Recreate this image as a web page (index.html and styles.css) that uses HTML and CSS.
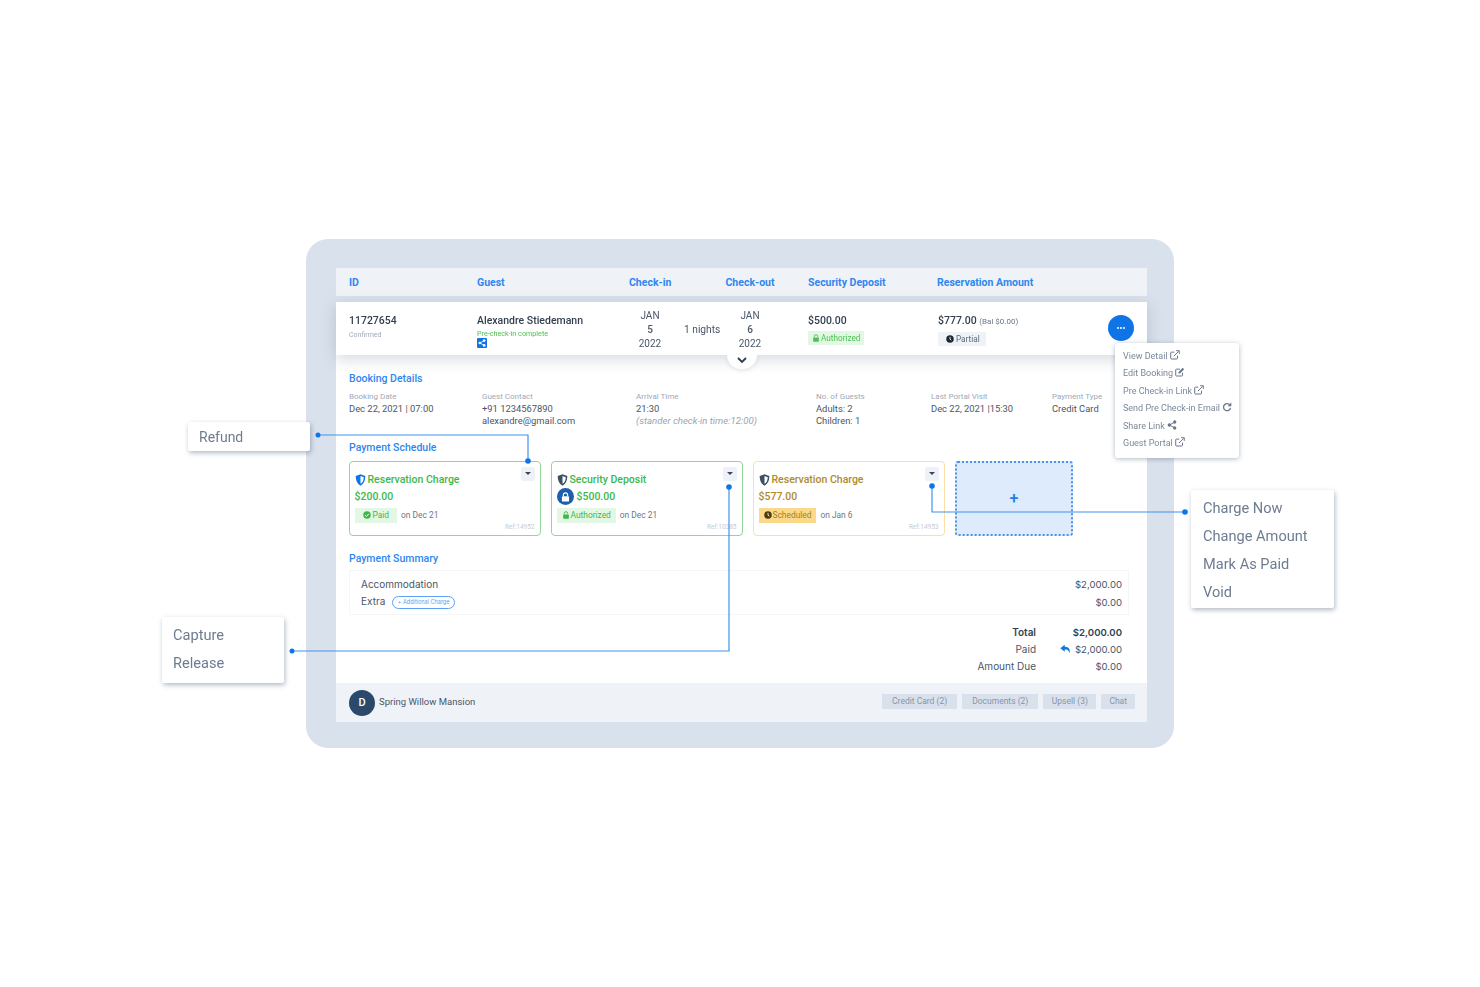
FILE: index.html
```html
<!DOCTYPE html>
<html lang="en">
<head>
  <meta charset="UTF-8" />
  <meta name="viewport" content="width=device-width, initial-scale=1.0" />
  <title>Reservation payments</title>
  <link rel="stylesheet" href="styles.css">
</head>
<body>
  <svg class="icon-defs" aria-hidden="true">
    <symbol id="i-shield" viewBox="0 0 12 14">
      <path d="M6 .4 11.6 2.4C11.7 7.6 10 11.4 6 13.6 2 11.4.3 7.6.4 2.4Z" fill="currentColor"/>
      <path d="M6 2.4 9.8 3.7C9.7 7.2 8.6 9.8 6 11.5Z" fill="#fff"/>
    </symbol>
    <symbol id="i-lock" viewBox="0 0 12 14">
      <path d="M3 6V4.2a3 3 0 0 1 6 0V6" fill="none" stroke="currentColor" stroke-width="1.6"/>
      <rect x="1" y="6" width="10" height="7.4" rx="1.2" fill="currentColor"/>
    </symbol>
    <symbol id="i-check" viewBox="0 0 12 12">
      <circle cx="6" cy="6" r="5.6" fill="currentColor"/>
      <path d="M3.3 6.2 5.2 8 8.8 4.3" fill="none" stroke="#fff" stroke-width="1.5"/>
    </symbol>
    <symbol id="i-clock" viewBox="0 0 12 12">
      <circle cx="6" cy="6" r="5.6" fill="currentColor"/>
      <path d="M6 2.8V6.3L8 7.6" fill="none" stroke="#fff" stroke-width="1.3"/>
    </symbol>
    <symbol id="i-ext" viewBox="0 0 14 14">
      <path d="M10.5 8v3.6a1 1 0 0 1-1 1H2a1 1 0 0 1-1-1V4a1 1 0 0 1 1-1h4" fill="none" stroke="currentColor" stroke-width="1.4"/>
      <path d="M5.5 8.5 12 2M8.6 1h4.4v4.4" fill="none" stroke="currentColor" stroke-width="1.4"/>
    </symbol>
    <symbol id="i-edit" viewBox="0 0 14 14">
      <path d="M10.5 8v3.6a1 1 0 0 1-1 1H2a1 1 0 0 1-1-1V4a1 1 0 0 1 1-1h5" fill="none" stroke="currentColor" stroke-width="1.4"/>
      <path d="M5 7 10.8 1.2 12.8 3.2 7 9H5Z" fill="currentColor"/>
    </symbol>
    <symbol id="i-share" viewBox="0 0 14 14">
      <path d="M10.8 3 3.2 7l7.6 4" fill="none" stroke="currentColor" stroke-width="1.4"/>
      <circle cx="10.8" cy="2.8" r="2.3" fill="currentColor"/>
      <circle cx="3.2" cy="7" r="2.3" fill="currentColor"/>
      <circle cx="10.8" cy="11.2" r="2.3" fill="currentColor"/>
    </symbol>
    <symbol id="i-redo" viewBox="0 0 14 14">
      <path d="M11.2 4.2A5 5 0 1 0 12 8.4" fill="none" stroke="currentColor" stroke-width="1.8"/>
      <path d="M13 .8V6H7.8Z" fill="currentColor"/>
    </symbol>
    <symbol id="i-reply" viewBox="0 0 14 12">
      <path d="M6 .6.4 5 6 9.4V6.6c3 0 5 .6 6.2 4.4C13.4 6.4 11 3.4 6 3.2Z" fill="currentColor"/>
    </symbol>
  </svg>

  <div class="page">
    <div class="frame">
      <div class="panel">
        <div class="table-head">
          <span>ID</span>
          <span>Guest</span>
          <span>Check-in</span>
          <span>Check-out</span>
          <span>Security Deposit</span>
          <span>Reservation Amount</span>
        </div>

        <div class="booking-row">
          <div>
            <div class="strong-line">11727654</div>
            <div class="sub-status">Confirmed</div>
          </div>
          <div>
            <div class="strong-line">Alexandre Stiedemann</div>
            <div class="precheck">Pre-check-in complete</div>
            <span class="share-chip"><svg class="ic-8"><use href="#i-share"/></svg></span>
          </div>
          <div class="date-stack">JAN<br><b>5</b><br>2022</div>
          <div class="nights">1 nights</div>
          <div class="date-stack">JAN<br><b>6</b><br>2022</div>
          <div class="deposit-col">
            <div class="strong-line">$500.00</div>
            <span class="tag tag-green"><svg class="ic-8"><use href="#i-lock"/></svg>Authorized</span>
          </div>
          <div class="amount-col">
            <div>
              <div class="strong-line">$777.00 <small>(Bal $0.00)</small></div>
              <span class="tag tag-grey"><svg class="ic-8"><use href="#i-clock"/></svg>Partial</span>
            </div>
            <span class="more-btn"><i></i><i></i><i></i></span>
          </div>
          <span class="expand-tab"><svg width="10" height="7" viewBox="0 0 10 7"><path d="M1 1l4 4 4-4" fill="none" stroke="#2f3b4c" stroke-width="1.8"/></svg></span>
        </div>

        <div class="details">
          <h3 class="section-title">Booking Details</h3>
          <div class="info-grid">
            <div><label>Booking Date</label><p>Dec 22, 2021 | 07:00</p></div>
            <div><label>Guest Contact</label><p>+91 1234567890<br>alexandre@gmail.com</p></div>
            <div><label>Arrival Time</label><p>21:30<br><em>(stander check-in time:12:00)</em></p></div>
            <div><label>No. of Guests</label><p>Adults: 2<br>Children: 1</p></div>
            <div><label>Last Portal Visit</label><p>Dec 22, 2021 |15:30</p></div>
            <div><label>Payment Type</label><p>Credit Card</p></div>
          </div>

          <h3 class="section-title schedule-title">Payment Schedule</h3>
          <div class="cards">
            <div class="card card-green">
              <span class="caret-btn"></span>
              <div class="card-title"><svg class="shield shield-blue"><use href="#i-shield"/></svg>Reservation Charge</div>
              <div class="card-amount">$200.00</div>
              <div class="card-foot">
                <span class="badge badge-green badge-paid"><svg class="ic-8"><use href="#i-check"/></svg>Paid</span>
                <span class="on-date">on Dec 21</span>
              </div>
              <span class="ref">Ref:14952</span>
            </div>
            <div class="card card-green">
              <span class="caret-btn"></span>
              <div class="card-title"><svg class="shield"><use href="#i-shield"/></svg>Security Deposit</div>
              <div class="card-amount"><span class="lock-dot"><svg class="ic-9"><use href="#i-lock"/></svg></span>$500.00</div>
              <div class="card-foot">
                <span class="badge badge-green"><svg class="ic-8"><use href="#i-lock"/></svg>Authorized</span>
                <span class="on-date">on Dec 21</span>
              </div>
              <span class="ref">Ref:10385</span>
            </div>
            <div class="card card-amber">
              <span class="caret-btn"></span>
              <div class="card-title"><svg class="shield"><use href="#i-shield"/></svg>Reservation Charge</div>
              <div class="card-amount">$577.00</div>
              <div class="card-foot">
                <span class="badge badge-amber"><svg class="ic-8"><use href="#i-clock"/></svg>Scheduled</span>
                <span class="on-date">on Jan 6</span>
              </div>
              <span class="ref">Ref:14953</span>
            </div>
            <div class="card-add">+</div>
          </div>

          <h3 class="section-title summary-title">Payment Summary</h3>
          <div class="summary-box">
            <div class="summary-line"><span>Accommodation</span><span class="money">$2,000.00</span></div>
            <div class="summary-line"><span>Extra <span class="pill">+ Additional Charge</span></span><span class="money">$0.00</span></div>
          </div>
          <div class="totals">
            <b>Total</b><b class="money">$2,000.00</b>
            <span>Paid</span><span class="money"><svg class="reply"><use href="#i-reply"/></svg>$2,000.00</span>
            <span>Amount Due</span><span class="money">$0.00</span>
          </div>
        </div>

        <div class="panel-foot">
          <div class="property"><span class="avatar">D</span><span class="property-name">Spring Willow Mansion</span></div>
          <div class="foot-btns">
            <span>Credit Card (2)</span>
            <span>Documents (2)</span>
            <span class="upsell-btn">Upsell (3)</span>
            <span class="chat-btn">Chat</span>
          </div>
        </div>
      </div>
    </div>

    <ul class="row-menu">
      <li>View Detail <svg class="ic-10"><use href="#i-ext"/></svg></li>
      <li>Edit Booking <svg class="ic-10"><use href="#i-edit"/></svg></li>
      <li>Pre Check-in Link <svg class="ic-10"><use href="#i-ext"/></svg></li>
      <li>Send Pre Check-in Email <svg class="ic-10"><use href="#i-redo"/></svg></li>
      <li>Share Link <svg class="ic-10"><use href="#i-share"/></svg></li>
      <li>Guest Portal <svg class="ic-10"><use href="#i-ext"/></svg></li>
    </ul>

    <svg class="connectors" width="1480" height="987" viewBox="0 0 1480 987">
      <g fill="none" stroke="#3f93ee" stroke-width="1.2">
        <path d="M318 435H528V461"/>
        <path d="M292 651H729V487"/>
        <path d="M1185 512H932V486"/>
      </g>
      <g fill="#0f74e6">
        <circle cx="318" cy="435" r="2.5"/>
        <circle cx="528" cy="461" r="2.8"/>
        <circle cx="292" cy="651" r="2.5"/>
        <circle cx="729" cy="487" r="2.8"/>
        <circle cx="1185" cy="512" r="2.8"/>
        <circle cx="932" cy="486" r="2.8"/>
      </g>
    </svg>

    <ul class="callout callout-refund"><li>Refund</li></ul>
    <ul class="callout callout-capture"><li>Capture</li><li>Release</li></ul>
    <ul class="callout callout-charge"><li>Charge Now</li><li>Change Amount</li><li>Mark As Paid</li><li>Void</li></ul>
  </div>
</body>
</html>
```

FILE: styles.css
```css
* {
  box-sizing: border-box;
}
body {
  margin: 0;
  background: #fff;
  font-family: Roboto, "Liberation Sans", sans-serif;
  color: #3a4657;
}
h3, p, ul {
  margin: 0;
  padding: 0;
}
ul {
  list-style: none;
}
.icon-defs {
  position: absolute;
  width: 0;
  height: 0;
}
.page {
  position: relative;
  width: 1480px;
  height: 987px;
  overflow: hidden;
  padding: 239px 0 0 306px;
  filter: blur(0.7px);
}
.frame {
  width: 868px;
  height: 509px;
  padding: 29px 27px 26px 30px;
  background: #d9e1ec;
  border-radius: 22px;
}
.panel {
  display: flex;
  flex-direction: column;
  height: 454px;
}

/* table head + booking row */
.table-head {
  display: grid;
  grid-template-columns: 128px 152px 96.5px 82.5px 129px 1fr;
  align-items: center;
  height: 28px;
  padding-left: 13px;
  background: #eff3f8;
  color: #2f86ee;
  font-size: 10.5px;
  font-weight: 700;
}
.booking-row {
  position: relative;
  z-index: 1;
  display: grid;
  grid-template-columns: 128px 143px 60px 44px 52px 162px 1fr;
  height: 53px;
  margin-top: 6px;
  padding: 12px 13px 0;
  background: #fff;
  box-shadow: 0 4px 14px rgba(60, 80, 110, 0.22);
}
.strong-line {
  font-size: 10.5px;
  font-weight: 500;
  line-height: 14px;
  color: #333f50;
}
.strong-line small {
  font-size: 8px;
  font-weight: 400;
  color: #6b7789;
}
.sub-status {
  margin-top: 3px;
  font-size: 7px;
  line-height: 9px;
  color: #a0a9b6;
}
.precheck {
  margin-top: 1px;
  font-size: 7.2px;
  line-height: 9px;
  color: #4cc152;
}
.share-chip {
  display: flex;
  align-items: center;
  justify-content: center;
  width: 10px;
  height: 10px;
  border-radius: 1px;
  background: #0f74e6;
  color: #fff;
}
.date-stack {
  margin-top: -5px;
  font-size: 10px;
  line-height: 14px;
  text-align: center;
  color: #4a5668;
}
.date-stack b {
  font-weight: 500;
}
.nights {
  align-self: center;
  margin-top: -11px;
  padding-left: 4px;
  font-size: 10.2px;
  color: #4a5668;
}
.deposit-col {
  padding-left: 32px;
}
.amount-col {
  display: flex;
  justify-content: space-between;
}
.tag {
  display: flex;
  align-items: center;
  gap: 1px;
  width: fit-content;
  height: 14px;
  margin-top: 3px;
  padding: 0 4px;
  font-size: 8.2px;
}
.tag-green {
  background: #e3f8e4;
  color: #4cc152;
}
.tag-grey {
  gap: 2px;
  padding: 0 6px 0 8px;
  background: #eff3f8;
  color: #5d6979;
}
.tag-grey svg {
  color: #1c2733;
}
.ic-8 {
  width: 8px;
  height: 8px;
}
.ic-9 {
  width: 9px;
  height: 10px;
}
.ic-10 {
  width: 10px;
  height: 10px;
  vertical-align: -1px;
  color: #6b7789;
}
.more-btn {
  display: flex;
  align-items: center;
  justify-content: center;
  gap: 1px;
  width: 26px;
  height: 26px;
  margin-top: 1px;
  border-radius: 50%;
  background: #0f74e6;
}
.more-btn i {
  width: 2px;
  height: 2px;
  border-radius: 50%;
  background: #fff;
}
.expand-tab {
  position: absolute;
  left: 391px;
  top: 53px;
  display: flex;
  justify-content: center;
  width: 30px;
  height: 14px;
  padding-top: 2px;
  border-radius: 0 0 15px 15px;
  background: #fff;
  box-shadow: 0 2px 4px rgba(60, 80, 110, 0.12);
}
.expand-tab svg {
  display: block;
}

/* details area */
.details {
  flex: 1;
  padding: 17px 18px 0 13px;
  background: #fff;
}
.section-title {
  font-size: 10.5px;
  font-weight: 500;
  line-height: 14px;
  color: #2f86ee;
}
.info-grid {
  display: grid;
  grid-template-columns: 133px 154px 180px 115px 121px 1fr;
  margin-top: 5px;
}
.info-grid label {
  display: block;
  font-size: 8px;
  line-height: 11px;
  color: #a0a9b6;
}
.info-grid p {
  margin-top: 1px;
  font-size: 9.4px;
  line-height: 12px;
  color: #4a5668;
}
.info-grid em {
  font-size: 9.6px;
  color: #9aa4b2;
}
.schedule-title {
  margin-top: 14px;
}
.cards {
  display: grid;
  grid-template-columns: 192px 192px 192px 118px;
  gap: 10px;
  height: 75px;
  margin-top: 6px;
}
.card {
  position: relative;
  padding: 10.5px 4.5px 0;
  border: 1.5px solid;
  border-radius: 4px;
}
.card-green {
  border-color: #93d69a;
  color: #3cb84a;
}
.card-amber {
  border-color: #f8e0a8;
  color: #ae8b2c;
}
.card-title {
  display: flex;
  align-items: center;
  gap: 2px;
  font-size: 10.5px;
  font-weight: 500;
  line-height: 14px;
}
.shield {
  width: 11px;
  height: 12px;
  color: #3c4f67;
}
.shield-blue {
  color: #0f74e6;
}
.card-amount {
  display: flex;
  align-items: center;
  gap: 3px;
  height: 14px;
  margin-top: 3px;
  font-size: 10.5px;
  font-weight: 500;
}
.lock-dot {
  display: flex;
  align-items: center;
  justify-content: center;
  width: 17px;
  height: 17px;
  border-radius: 50%;
  background: #1d5fa8;
  color: #fff;
}
.card-foot {
  display: flex;
  align-items: center;
  gap: 4px;
  margin-top: 4px;
}
.badge {
  display: inline-flex;
  align-items: center;
  gap: 1px;
  height: 15px;
  padding: 0 5px;
  font-size: 8.4px;
}
.badge-paid {
  gap: 2px;
  padding: 0 8px;
}
.badge-green {
  background: #e3f8e4;
}
.badge-amber {
  background: #fbd98a;
  color: #a5801f;
}
.badge-amber svg {
  color: #4a3a10;
}
.on-date {
  font-size: 8.4px;
  color: #6b7789;
}
.ref {
  position: absolute;
  right: 5.5px;
  bottom: 4.5px;
  font-size: 6.5px;
  color: #c5ccd6;
}
.caret-btn {
  position: absolute;
  top: 4.5px;
  right: 5.5px;
  display: flex;
  align-items: center;
  justify-content: center;
  width: 14px;
  height: 14px;
  border-radius: 2px;
  background: #eef1f7;
}
.caret-btn::after {
  content: "";
  border: 3px solid transparent;
  border-top: 3px solid #3a4657;
  border-bottom: 0;
}
.card-add {
  display: flex;
  align-items: center;
  justify-content: center;
  border: 2px dotted #4a95ea;
  border-radius: 3px;
  background: #ddebfd;
  color: #1d7fe8;
  font-size: 16px;
  font-weight: 500;
}
.summary-title {
  margin-top: 16px;
}
.summary-box {
  height: 45px;
  margin-top: 4px;
  padding: 4px 6px 0 11px;
  border: 1px solid #f5f6f8;
}
.summary-line {
  display: flex;
  justify-content: space-between;
  align-items: center;
  height: 18px;
  font-family: Inter, Roboto, sans-serif;
  font-size: 10px;
  color: #4a5668;
}
.money {
  font-size: 9.6px;
}
.pill {
  display: inline-block;
  width: 63px;
  height: 13px;
  margin-left: 4px;
  border: 1px solid #5aa2f2;
  border-radius: 7px;
  color: #5aa2f2;
  font-size: 5.5px;
  line-height: 11px;
  text-align: center;
  vertical-align: 1px;
}
.totals {
  display: grid;
  grid-template-columns: auto 86px;
  justify-content: end;
  margin-top: 9px;
  padding-right: 7px;
  font-family: Inter, Roboto, sans-serif;
  font-size: 10px;
  line-height: 17px;
  text-align: right;
  color: #4a5668;
}
.totals b {
  color: #333f50;
  font-weight: 600;
}
.reply {
  width: 11px;
  height: 10px;
  margin-right: 4px;
  vertical-align: -1px;
  color: #0f74e6;
}

/* footer strip */
.panel-foot {
  display: flex;
  align-items: center;
  justify-content: space-between;
  height: 39px;
  padding: 0 12px 0 13px;
  background: #eff3f8;
}
.property {
  display: flex;
  align-items: center;
  gap: 4px;
  font-size: 9.5px;
  color: #4a5668;
}
.property-name {
  margin-top: -2px;
}
.avatar {
  display: flex;
  align-items: center;
  justify-content: center;
  width: 26px;
  height: 26px;
  border-radius: 50%;
  background: #2b4a6b;
  color: #fff;
  font-size: 11px;
  font-weight: 500;
}
.foot-btns {
  display: flex;
  gap: 5px;
  margin-top: -2px;
}
.foot-btns span {
  padding: 0 10px;
  height: 15px;
  background: #d9e1ec;
  color: #8795a8;
  font-size: 8.5px;
  line-height: 15px;
}
.foot-btns .upsell-btn {
  padding: 0 8.5px;
}
.foot-btns .chat-btn {
  padding: 0 8px;
}

/* floating bits */
.row-menu {
  position: absolute;
  z-index: 2;
  left: 1115px;
  top: 343px;
  width: 124px;
  height: 115px;
  padding: 5px 0 0 8px;
  border-radius: 3px;
  background: #fff;
  box-shadow: 0 1px 5px rgba(60, 80, 110, 0.4);
  font-size: 9px;
  line-height: 17.4px;
  color: #7b8899;
}
.connectors {
  position: absolute;
  z-index: 2;
  left: 0;
  top: 0;
}
.callout {
  position: absolute;
  padding: 0 11px;
  background: #fff;
  border-radius: 2px;
  box-shadow: 1px 2px 5px rgba(60, 80, 110, 0.4);
  font-size: 14.6px;
  color: #6e7c91;
}
.callout-refund {
  left: 188px;
  top: 422px;
  width: 122px;
  height: 29px;
  font-size: 14px;
  line-height: 30px;
}
.callout-capture {
  left: 162px;
  top: 617px;
  width: 122px;
  height: 66px;
  padding-top: 4px;
  line-height: 28px;
}
.callout-charge {
  left: 1191px;
  top: 490px;
  width: 143px;
  height: 118px;
  padding: 4px 12px 0;
  line-height: 28px;
}
```
